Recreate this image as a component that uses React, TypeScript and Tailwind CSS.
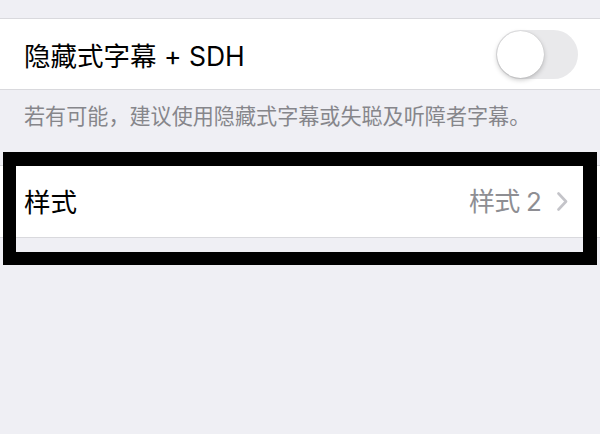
import React from "react";

export default function App() {
  return (
    <div
      className="relative w-[600px] h-[434px] overflow-hidden bg-[#efeff4]"
      style={{ fontFamily: 'Inter, "Noto Sans CJK SC", sans-serif' }}
    >
      <div className="h-[18px]" />
      <div className="flex h-[72px] items-center justify-between border-y border-[#d9d9dd] bg-white pl-[24px] pr-[22px]">
        <span className="mt-[4px] text-[26.5px] leading-none text-black">隐藏式字幕 + SDH</span>
        <div className="relative h-[49px] w-[82px] rounded-full bg-[#e9e9eb]">
          <div className="absolute left-[1px] top-[1px] h-[47px] w-[47px] rounded-full bg-white shadow-[0_2px_5px_rgba(0,0,0,0.22),0_0_1px_rgba(0,0,0,0.2)]" />
        </div>
      </div>
      <div className="h-[75px] pl-[24px] pt-[14px]">
        <span className="text-[21.1px] leading-[26px] text-[#86868b]">若有可能，建议使用隐藏式字幕或失聪及听障者字幕。</span>
      </div>
      <div className="flex h-[73px] items-center justify-between border-y border-[#d9d9dd] bg-white pl-[24px] pr-[32px]">
        <span className="mt-[1px] text-[26.5px] leading-none text-black">样式</span>
        <div className="flex items-center gap-[16px]">
          <span className="mt-[1px] text-[26px] leading-none text-[#8e8e93] tracking-[-0.8px]">样式 2</span>
          <svg width="11" height="19" viewBox="0 0 11 19" fill="none">
            <path d="M1.5 1.5L9 9.5L1.5 17.5" stroke="#c4c4c9" strokeWidth="2.6" strokeLinecap="round" strokeLinejoin="round" />
          </svg>
        </div>
      </div>
      <div className="absolute left-[3px] top-[152px] h-[113px] w-[594px] border-t-[14px] border-r-[14px] border-b-[13px] border-l-[13px] border-black" />
    </div>
  );
}
